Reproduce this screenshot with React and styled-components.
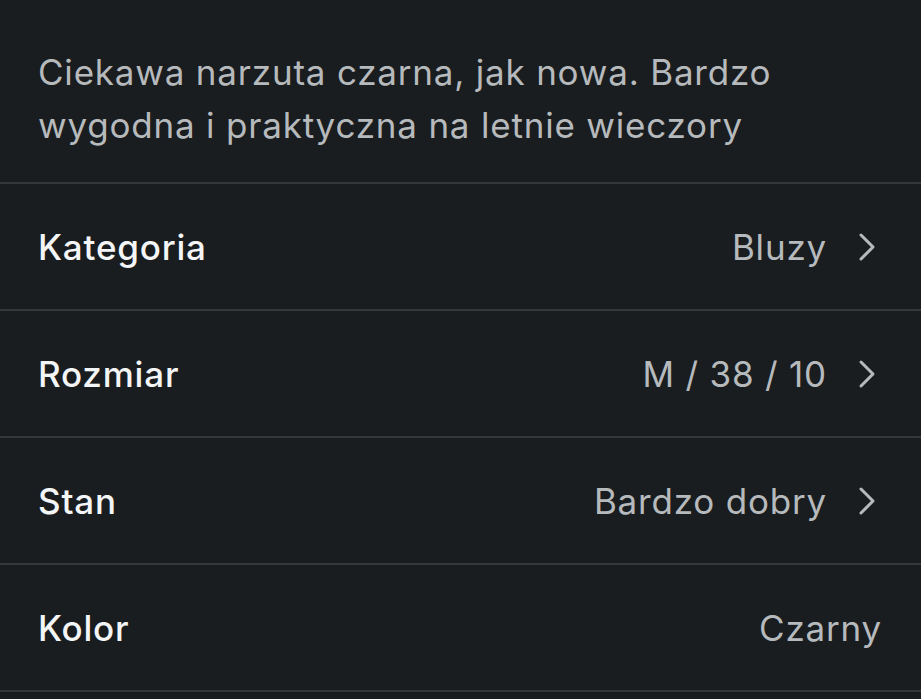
import React from "react";
import styled, { createGlobalStyle } from "styled-components";

const GlobalStyle = createGlobalStyle`
  html, body {
    margin: 0;
    padding: 0;
    background: #1a1d1f;
  }
  body {
    font-family: Inter, "Noto Sans", sans-serif;
    -webkit-font-smoothing: antialiased;
  }
`;

const Page = styled.div`
  width: 921px;
  height: 699px;
  overflow: hidden;
  background: #1a1d1f;
`;

const Description = styled.p`
  margin: 0;
  padding: 46px 38px 30px;
  font-size: 35px;
  line-height: 53px;
  letter-spacing: 0.8px;
  color: #b6babd;
  border-bottom: 2px solid #34383b;
`;

const Row = styled.div`
  display: flex;
  align-items: center;
  justify-content: space-between;
  height: 125px;
  padding: 0 39px 0 38px;
  border-bottom: 2px solid #34383b;
`;

const Label = styled.span`
  font-size: 35px;
  font-weight: 500;
  letter-spacing: 0.8px;
  color: #f4f5f6;
`;

const Value = styled.span`
  display: flex;
  align-items: center;
  gap: 31px;
  font-size: 35px;
  letter-spacing: 0.8px;
  color: #b6babd;
  margin-right: ${props => (props.arrow ? "6px" : "0")};
`;

const Chevron = () => (
  <svg width="18" height="30" viewBox="0 0 18 30" fill="none">
    <path
      d="M3 3 L15 15 L3 27"
      stroke="#b6babd"
      strokeWidth="3"
      strokeLinecap="round"
      strokeLinejoin="round"
    />
  </svg>
);

const rows = [
  { label: "Kategoria", value: "Bluzy", arrow: true },
  { label: "Rozmiar", value: "M / 38 / 10", arrow: true },
  { label: "Stan", value: "Bardzo dobry", arrow: true },
  { label: "Kolor", value: "Czarny", arrow: false },
];

export default function App() {
  return (
    <Page>
      <GlobalStyle />
      <Description>
        Ciekawa narzuta czarna, jak nowa. Bardzo wygodna i praktyczna na letnie
        wieczory
      </Description>
      {rows.map(row => (
        <Row key={row.label}>
          <Label>{row.label}</Label>
          <Value arrow={row.arrow}>
            {row.value}
            {row.arrow && <Chevron />}
          </Value>
        </Row>
      ))}
    </Page>
  );
}
